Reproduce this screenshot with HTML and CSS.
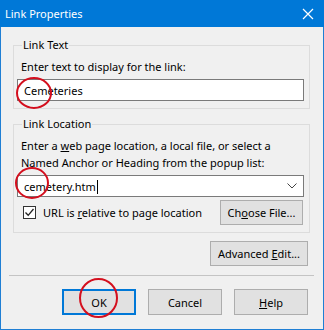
FILE: index.html
```html
<!DOCTYPE html>
<html lang="en">
<head>
  <meta charset="UTF-8" />
  <title>Link Properties</title>
  <link rel="stylesheet" href="styles.css">
</head>
<body>
  <div class="window">
    <div class="titlebar">
      <span class="title">Link Properties</span>
      <svg class="close" width="12" height="12" viewBox="0 0 12 12">
        <path d="M1 1 L11 11 M11 1 L1 11" stroke="#fff" stroke-width="1.2" fill="none" />
      </svg>
    </div>

    <div class="content">
      <fieldset class="group">
        <legend>Link Text</legend>
        <div class="label">Enter text to display for the link:</div>
        <div class="textbox">Cemeteries</div>
      </fieldset>

      <fieldset class="group group-location">
        <legend>Link Location</legend>
        <div class="label label-wrap">Enter a <u>w</u>eb page location, a local file, or select a<br>Named Anchor or Heading from the popup list:</div>
        <div class="textbox combo">
          <span>cemetery.htm<span class="caret"></span></span>
          <svg class="chevron" width="10" height="6" viewBox="0 0 10 6">
            <path d="M0.5 0.5 L5 5 L9.5 0.5" stroke="#444" stroke-width="1" fill="none" />
          </svg>
        </div>
        <div class="check-row">
          <label class="check">
            <span class="box">
              <svg width="11" height="11" viewBox="0 0 11 11">
                <path d="M1.5 5.5 L4.2 8.3 L9.5 2" stroke="#222" stroke-width="1.3" fill="none" />
              </svg>
            </span>
            <span>URL is <u>r</u>elative to page location</span>
          </label>
          <button class="btn btn-choose">Ch<u>o</u>ose File...</button>
        </div>
      </fieldset>

      <div class="advanced-row">
        <button class="btn btn-advanced">Advanced <u>E</u>dit...</button>
      </div>
    </div>

    <div class="separator"></div>

    <div class="footer">
      <button class="btn btn-default">OK</button>
      <button class="btn">Cancel</button>
      <button class="btn"><u>H</u>elp</button>
    </div>

    <svg class="marks" width="324" height="330" viewBox="0 0 324 330">
      <ellipse cx="34" cy="93" rx="17" ry="15" />
      <ellipse cx="32" cy="183" rx="16" ry="15" />
      <ellipse cx="98.5" cy="298" rx="18.5" ry="19" />
    </svg>
  </div>
</body>
</html>
```

FILE: styles.css
```css
body {
  margin: 0;
  font-family: "Noto Sans", sans-serif;
  font-size: 11px;
  color: #000;
  background-color: #fff;
}

.window {
  position: relative;
  width: 322px;
  height: 329px;
  background-color: #f0f0f0;
  border: 1px solid #1f7fd4;
  border-top: none;
}

.titlebar {
  height: 27px;
  margin: 0 -1px;
  padding: 0 10px 0 5px;
  background-color: #0078d7;
  color: #fff;
  display: flex;
  align-items: center;
  justify-content: space-between;
}

.title {
  font-size: 11px;
  margin-top: -1px;
}

.content {
  padding: 10px 13px 0 12px;
}

.group {
  margin: 0;
  padding: 6px 5px 7px 3px;
  border: 1px solid #dcdcdc;
  min-width: 0;
}

.group legend {
  padding: 0 1px;
  margin-left: 5px;
  line-height: 16px;
}

.group-location {
  margin-top: 7px;
  padding-top: 5px;
}

.label {
  line-height: 16px;
  padding-left: 4px;
}

.label-wrap {
  line-height: 17px;
}

.textbox {
  margin-top: 4px;
  height: 20px;
  border: 1px solid #7a7a7a;
  background-color: #fff;
  padding: 0 6px;
  display: flex;
  align-items: center;
}

.combo {
  justify-content: space-between;
  padding-right: 6px;
}

.caret {
  display: inline-block;
  width: 1px;
  height: 14px;
  background-color: #000;
  vertical-align: -3px;
  margin-left: 1px;
}

.check-row {
  margin-top: 3px;
  display: flex;
  align-items: center;
  justify-content: space-between;
}

.check {
  display: flex;
  align-items: center;
  gap: 7px;
  padding-left: 6px;
}

.box {
  width: 11px;
  height: 11px;
  border: 1px solid #333;
  background-color: #fff;
  display: flex;
}

.btn {
  font-family: inherit;
  font-size: 11px;
  color: #000;
  background-color: #e1e1e1;
  border: 1px solid #adadad;
  height: 25px;
  padding: 0;
  margin: 0;
}

.btn-choose {
  width: 83px;
  margin-right: 1px;
}

.advanced-row {
  display: flex;
  justify-content: flex-end;
  margin-top: 8px;
  padding-right: 2px;
}

.btn-advanced {
  width: 98px;
}

.separator {
  margin: 9px 9px 0 8px;
  height: 1px;
  background-color: #c4c4c4;
}

.footer {
  display: flex;
  justify-content: flex-end;
  gap: 12px;
  margin-top: 13px;
  padding-right: 15px;
}

.footer .btn {
  width: 74px;
  height: 26px;
}

.footer .btn-default {
  border: 2px solid #0078d7;
}

.marks {
  position: absolute;
  left: -1px;
  top: 0;
  pointer-events: none;
}

.marks ellipse {
  fill: none;
  stroke: #d40f1e;
  stroke-width: 2;
}
```
